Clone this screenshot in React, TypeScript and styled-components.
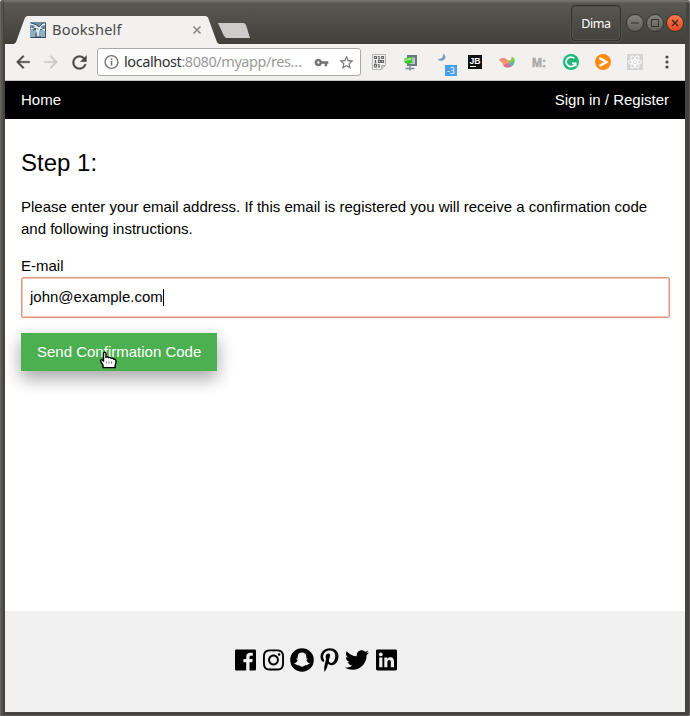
import React from 'react';
import styled, { createGlobalStyle } from 'styled-components';
import { FaInstagram, FaPinterestP, FaTwitter } from 'react-icons/fa';
import { MdVpnKey, MdStarBorder, MdRefresh, MdArrowBack, MdArrowForward } from 'react-icons/md';

const Global = createGlobalStyle`
  * { box-sizing: border-box; }
  body { margin: 0; background: #dedede; overflow: hidden; }
  svg { display: block; }
`;

const Window = styled.div`
  width: 690px;
  height: 716px;
  display: flex;
  flex-direction: column;
  padding: 0 5px 4px;
  background: #44433e;
  border-radius: 4px 4px 2px 2px;
  box-shadow: inset 1px 1px 0 #65645f, inset -1px -1px 0 #5c5b57, inset 3px 0 0 #57544d, inset 0 2px 0 #7c7a73;
`;
const TitleBar = styled.header`
  height: 44px;
  margin: 0 -1px 0 -1px;
  flex: none;
  display: flex;
  align-items: flex-start;
  justify-content: space-between;
  background: linear-gradient(#75736c 0 1px, #5a5851 3px, #403f3a 44px);
`;
const Tabs = styled.div`
  display: flex;
  padding: 16px 0 0 10px;
`;
const Tab = styled.div`
  width: 205px;
  height: 28px;
  display: flex;
  align-items: center;
  padding: 0 17px 0 16px;
  background: #f2f1f0;
  clip-path: polygon(0 100%, 2px 94%, 11px 5%, 13px 0, 192px 0, 194px 5%, 203px 94%, 205px 100%);
`;
const TabTitle = styled.span`
  flex: 1;
  margin: 0 0 2px 6px;
  font: 14.6px/20px "Noto Sans", sans-serif;
  letter-spacing: 0.2px;
  color: #494949;
`;
const NewTab = styled.div`
  width: 32px;
  height: 15px;
  margin: 7px 0 0 -1px;
  background: #cdccca;
  clip-path: polygon(0 0, 26px 0, 28px 2px, 32px 100%, 8px 100%, 6px 13px);
`;
const WindowControls = styled.div`
  display: flex;
  align-items: flex-start;
  padding: 5px 1px 0 0;
`;
const UserButton = styled.div`
  width: 50px;
  height: 36px;
  margin-right: 4px;
  border: 1px solid #32312d;
  border-radius: 4px;
  box-shadow: 0 0 0 1px #55534d, inset 0 0 0 1px #514f49;
  font: 12.5px/35px "Noto Sans", sans-serif;
  letter-spacing: -0.4px;
  text-align: center;
  color: #fff;
`;
const WindowButton = styled.div<{ $close?: boolean }>`
  width: 18px;
  height: 18px;
  margin: 9px 1px 0;
  border: 1px solid #35342f;
  border-radius: 50%;
  background: ${p => (p.$close ? 'linear-gradient(#f47751, #e34c1e)' : 'linear-gradient(#85837c, #605f58)')};
`;
const Toolbar = styled.div`
  height: 37px;
  flex: none;
  display: flex;
  align-items: center;
  border-bottom: 1px solid #c9c8c6;
  background: #f2f1f0;
  color: #494949;
`;
const NavButton = styled.div<{ $disabled?: boolean }>`
  width: 28px;
  display: flex;
  justify-content: center;
  color: ${p => (p.$disabled ? '#cbcac9' : '#494949')};
  path:last-child { stroke: currentColor; stroke-width: 0.4; }
  &:first-child { margin-left: 4px; }
`;
const AddressBar = styled.div`
  width: 264px;
  height: 28px;
  margin-left: 4px;
  padding: 0 5px 0 6px;
  border: 1px solid #a9a9a8;
  border-radius: 3px;
  display: flex;
  align-items: center;
  background: #fff;
  color: #737373;
`;
const Url = styled.span`
  flex: 1;
  margin: 0 0 2px 4px;
  font: 14.5px/22px "Noto Sans", sans-serif;
  letter-spacing: -0.43px;
  color: #9a9a9a;
  white-space: nowrap;
  b { font-weight: 400; color: #303030; }
`;
const KeyIcon = styled.span`
  margin-right: 9px;
`;
const Extensions = styled.div`
  display: flex;
  margin-left: 2px;
`;
const Extension = styled.div`
  width: 32px;
  height: 28px;
  display: flex;
  align-items: center;
  justify-content: center;
  position: relative;
`;
const Badge = styled.span`
  position: absolute;
  left: 18px;
  top: 17px;
  width: 12px;
  height: 11px;
  background: #48a0ed;
  color: #fff;
  font: 9px/11px "Noto Sans", sans-serif;
  text-align: center;
`;
const Page = styled.div`
  flex: 1;
  min-height: 0;
  display: flex;
  flex-direction: column;
  background: #fff;
  color: #000;
  font: 15px/22.5px "Liberation Sans", Arial, sans-serif;
`;
const SiteNav = styled.nav`
  height: 38px;
  flex: none;
  padding: 8px 16px;
  display: flex;
  justify-content: space-between;
  background: #000;
  color: #fff;
`;
const Main = styled.main`
  flex: 1;
  padding: 26px 16px 0;
`;
const Heading = styled.h3`
  margin: 0 0 15px;
  font-size: 24px;
  line-height: 36px;
  font-weight: 400;
`;
const Intro = styled.p`
  margin: 0 0 15px;
  line-height: 22px;
`;
const Label = styled.label`
  display: block;
  height: 22px;
`;
const EmailField = styled.div`
  width: 649px;
  height: 41px;
  padding: 0 8px;
  display: flex;
  align-items: center;
  border: 1px solid #dc987f;
  border-radius: 2px;
  box-shadow: inset 0 0 0 1px #f8c9b8;
`;
const Caret = styled.span`
  width: 1px;
  height: 17px;
  background: #000;
`;
const SendButton = styled.div`
  width: 196px;
  height: 38px;
  margin-top: 15px;
  padding: 8px 16px;
  position: relative;
  background: #4caf50;
  color: #fff;
  white-space: nowrap;
  box-shadow: 0 8px 16px 0 rgba(0, 0, 0, 0.2), 0 6px 20px 0 rgba(0, 0, 0, 0.19);
`;
const Pointer = styled.svg`
  position: absolute;
  left: 78px;
  top: 18px;
`;
const Footer = styled.footer`
  height: 101px;
  flex: none;
  display: flex;
  align-items: center;
  padding: 0 0 3px 230px;
  background: #f0f0f0;
`;
const Social = styled.span<{ $w: number; $gap?: number }>`
  width: ${p => p.$w}px;
  margin-right: ${p => p.$gap ?? 0}px;
  display: flex;
  justify-content: center;
`;

const Favicon = () => (
  <svg width="16" height="16" viewBox="0 0 16 16">
    <rect width="16" height="16" rx="1" fill="#6e8da5" />
    <path d="M0 8h16v7H0z" fill="#91aebe" />
    <path d="M0 2l5 1 3 3 4-3 4-1M1 7l5-2 4 1 5 2M6 7l2 3v5M10 6l-2 4" stroke="#e9f3f4" strokeWidth="1.4" fill="none" />
    <path d="M1 1l6 2 2 2 4-4M2 5l4 2-3 1M10 8l4-2M6 11v4h5M.5 15.500h15V.5" stroke="#263b4d" strokeWidth=".8" fill="none" />
  </svg>
);
const InfoIcon = () => (
  <svg width="16" height="16" viewBox="0 0 16 16" fill="none" stroke="#737373" strokeWidth="1.4">
    <circle cx="7.500" cy="8" r="6.4" /><path d="M7.500 7v4.500M7.500 4.300v1.600" strokeWidth="1.6" />
  </svg>
);
const BinaryIcon = () => (
  <svg width="16" height="16" viewBox="0 0 16 16">
    <path d="M1.500.5h13v11l-4 4h-9z" fill="#f2f2f2" stroke="#b5b5b5" />
    <path d="M14 11.500h-3.500V15" fill="#ccc" stroke="#aaa" />
    <g fill="none" stroke="#686868" strokeWidth="1.200">
      <path d="M3.500 2.500h2v2h-2zM8 2v3M7 2.500h1M7 5h2M10.500 2.500h2v2h-2zM4.500 6v3M3.500 6.500h1M3.500 9h2M7.500 6.500h2v2h-2zM10.500 6.500h2v2h-2zM3.500 10.500h2v2.500h-2zM8 10v3M7 10.500h1M7 13h2" />
    </g>
  </svg>
);
const ProxyIcon = () => (
  <svg width="16" height="17" viewBox="0 0 16 17">
    <path d="M4 1h10v11H4z" fill="#6f7a80" /><path d="M6.500 3.500H12V10H6.500z" fill="#bcc6ca" />
    <path d="M1.500 4.500l7-2 1 6-3 .7-2 1.800-.8-1.500-2.200-.8z" fill="#38bf32" /><path d="M2.200 5l5.800-1.500.5 2.500-6.300 1z" fill="#91ed6f" />
    <path d="M7 11.500v5M2.500 14.500h9" stroke="#7f8c94" strokeWidth="1.500" />
  </svg>
);
const MoonIcon = () => (
  <svg width="20" height="20" viewBox="0 0 20 20">
    <path d="M10.500 2c3 2.500 1.500 6.500-2.500 6.500-1.300 0-2.300-.4-3-1.200 3 .4 5.500-1.200 5.500-5.300z" fill="#7893b4" stroke="#7893b4" strokeWidth=".5" />
  </svg>
);
const JbIcon = () => (
  <svg width="14" height="14" viewBox="0 0 14 14">
    <rect width="14" height="14" fill="#111" /><rect x="2" y="11" width="6" height="1" fill="#fff" />
    <text x="1.500" y="8.800" fill="#fff" fontFamily="Liberation Sans, sans-serif" fontWeight="700" fontSize="9.500" textLength="11" lengthAdjust="spacingAndGlyphs">JB</text>
  </svg>
);
const SwirlIcon = () => (
  <svg width="16" height="14" viewBox="0 0 16 14">
    <path d="M0 4c2 0 3-1.500 5-1 2.500.6 3.500 3 6 2.500 2-.4 2-2 1.500-3.500C15 2.500 16 4.500 15.500 6.500 15 10 12.500 12.500 9 12.500c-3.500 0-5.500-2-5.500-4.500C2 7.500.8 6 0 4z" fill="#f2a25c" />
    <path d="M0 4c2 0 3-1.500 5-1 2 .5 3 2.200 4.500 2.500C7 7.500 2.500 8 0 4z" fill="#ef8f78" />
    <path d="M8.500 5.500c2.500.8 4.500-.5 4-3.500C15 2.500 16 4.500 15.500 6.500 13 8 10.500 7.500 8.500 5.500z" fill="#79cf55" />
    <path d="M10 7c2 .7 4 .5 5.500-.5-.3 2-1.200 3.500-2.700 4.700z" fill="#4bb9b0" />
    <path d="M8.500 7.500l4.300 3.700C11.500 12 10 12.500 8.500 12.500z" fill="#a978cf" />
    <path d="M7.500 7.500l1.500 5c-2 0-3.500-.6-4.500-2z" fill="#e76698" />
  </svg>
);
const MIcon = () => (
  <svg width="16" height="14" viewBox="0 0 16 14">
    <text x="1" y="11.500" fill="#aaa" stroke="#aaa" strokeWidth=".5" fontFamily="Liberation Sans, sans-serif" fontWeight="700" fontSize="12" textLength="14">M:</text>
  </svg>
);
const GrammarIcon = () => (
  <svg width="16" height="16" viewBox="0 0 16 16"><circle cx="8" cy="8" r="8" fill="#20b779" />
    <path d="M11.200 4.300A4.800 4.800 0 1 0 12.500 9.300H9M12.700 9v3.300" fill="none" stroke="#fff" strokeWidth="1.700" /></svg>
);
const PlayIcon = () => (
  <svg width="16" height="16" viewBox="0 0 16 16"><circle cx="8" cy="8" r="8" fill="#ff8a12" />
    <path d="M4.500 4l6.800 4-6.800 4" fill="none" stroke="#fff" strokeWidth="2.500" /></svg>
);
const ReactIcon = () => (
  <svg width="16" height="16" viewBox="0 0 16 16"><path fill="#d4d4d4" d="M0 0h16v16H0z" />
    <g fill="none" stroke="#fff" strokeWidth="1">
      <ellipse cx="8" cy="8" rx="6.600" ry="2.500" /><ellipse cx="8" cy="8" rx="6.600" ry="2.500" transform="rotate(60 8 8)" /><ellipse cx="8" cy="8" rx="6.600" ry="2.500" transform="rotate(120 8 8)" />
    </g><circle cx="8" cy="8" r="1.400" fill="#fff" /></svg>
);
const MenuIcon = () => (
  <svg width="4" height="16" viewBox="0 0 4 16" fill="#494949"><circle cx="2" cy="3" r="1.600" /><circle cx="2" cy="8" r="1.600" /><circle cx="2" cy="13" r="1.600" /></svg>
);
const FacebookIcon = () => (
  <svg width="21" height="22" viewBox="0 0 21 22">
    <path fillRule="evenodd" d="M1.200.5h18.600q1.200 0 1.200 1.200v18.600q0 1.200-1.200 1.200h-5.300v-8.200h2.800l.4-3.200h-3.200V8.200c0-.9.3-1.500 1.600-1.500h1.700V3.800c-.3 0-1.300-.1-2.500-.1-2.500 0-4.100 1.500-4.100 4.200v2.200H8.400v3.200h2.800v8.200H1.200Q0 21.500 0 20.300V1.700Q0 .5 1.200 .5z" />
  </svg>
);
const SnapchatIcon = () => (
  <svg width="24" height="24" viewBox="0 0 24 24">
    <circle cx="12" cy="12" r="11.800" />
    <path fill="#f0f0f0" d="M12 4.600c-2.900 0-4.500 2-4.400 4.500v1.500c-.3.200-1-.2-1.300.1-.4.500 1.100.9 1.300 1.400.2 1-1.500 2.800-3.100 3.100-.5.600.7 1 1.900 1.200.3.300.1.800.5.900.7.100 1.500-.2 2.300.2.900.6 1.600 1.200 2.800 1.200s1.900-.6 2.800-1.200c.8-.4 1.600-.1 2.300-.2.400-.1.200-.6.500-.9 1.200-.2 2.400-.6 1.900-1.200-1.600-.3-3.300-2.100-3.100-3.100.2-.5 1.700-.9 1.300-1.400-.3-.3-1 .1-1.300-.1V9.100c.1-2.500-1.500-4.500-4.400-4.500z" />
  </svg>
);
const LinkedinIcon = () => (
  <svg width="21" height="22" viewBox="0 0 21 22">
    <rect y=".5" width="21" height="21" rx="1.400" />
    <g fill="#f0f0f0"><circle cx="4.800" cy="5.400" r="1.850" /><path d="M3.200 8.500h3.200v9.800H3.200zM8.300 8.500h3v1.400c.6-1 1.600-1.700 3-1.700 2.900 0 3.700 1.900 3.700 4.600v5.500h-3.200v-5c0-1.300-.3-2.400-1.600-2.400-1.400 0-1.800 1.100-1.800 2.400v5H8.300z" /></g>
  </svg>
);

export default function App() {
  return (
    <>
      <Global />
      <Window>
        <TitleBar>
          <Tabs>
            <Tab>
              <Favicon /><TabTitle>Bookshelf</TabTitle>
              <svg width="10" height="10" viewBox="0 0 10 10"><path d="M1.500 1.500l7 7m0-7l-7 7" stroke="#8b8b8a" strokeWidth="1.700" /></svg>
            </Tab>
            <NewTab />
          </Tabs>
          <WindowControls>
            <UserButton>Dima</UserButton>
            <WindowButton><svg width="16" height="16"><path d="M4 8h8" stroke="#34332f" /></svg></WindowButton>
            <WindowButton><svg width="16" height="16"><path d="M4.500 4.500h7v7h-7z" stroke="#34332f" fill="none" /></svg></WindowButton>
            <WindowButton $close><svg width="16" height="16"><path d="M5 5l6 6m0-6l-6 6" stroke="#3b211a" strokeWidth="1.300" /></svg></WindowButton>
          </WindowControls>
        </TitleBar>
        <Toolbar>
          <NavButton><MdArrowBack size={20} /></NavButton>
          <NavButton $disabled><MdArrowForward size={20} /></NavButton>
          <NavButton><MdRefresh size={21} /></NavButton>
          <AddressBar>
            <InfoIcon />
            <Url><b>localhost</b>:8080/myapp/res…</Url>
            <KeyIcon><MdVpnKey size={15} /></KeyIcon>
            <MdStarBorder size={17} />
          </AddressBar>
          <Extensions>
            <Extension><BinaryIcon /></Extension>
            <Extension><ProxyIcon /></Extension>
            <Extension><MoonIcon /><Badge>-3</Badge></Extension>
            <Extension><JbIcon /></Extension>
            <Extension><SwirlIcon /></Extension>
            <Extension><MIcon /></Extension>
            <Extension><GrammarIcon /></Extension>
            <Extension><PlayIcon /></Extension>
            <Extension><ReactIcon /></Extension>
            <Extension><MenuIcon /></Extension>
          </Extensions>
        </Toolbar>
        <Page>
          <SiteNav><span>Home</span><span>Sign in / Register</span></SiteNav>
          <Main>
            <Heading>Step 1:</Heading>
            <Intro>Please enter your email address. If this email is registered you will receive a confirmation code and following instructions.</Intro>
            <Label>E-mail</Label>
            <EmailField>john@example.com<Caret /></EmailField>
            <SendButton>
              Send Confirmation Code
              <Pointer width="19" height="19" viewBox="0 0 19 19">
                <path d="M4.500 2C5.500.7 7 1.300 7 2.700V6c1-.5 2-.2 2.500.6 1-.4 2-.1 2.600.7 1.200-.4 2.200 0 2.700.9 1.200-.2 2 .5 2.200 1.600.2 2-.2 3.200-.8 4.200v2.600H4v-2.300L1.800 10.500c-.9-1.200.7-2.300 1.800-1.300l.9.700z" fill="#fff" stroke="#000" strokeWidth="1.400" />
                <path d="M7.500 10.500v2M10 10.500v2M12.500 10.500v2" stroke="#777" />
              </Pointer>
            </SendButton>
          </Main>
          <Footer>
            <Social $w={21} $gap={6}><FacebookIcon /></Social>
            <Social $w={23} $gap={5}><FaInstagram size={24} /></Social>
            <Social $w={24} $gap={6}><SnapchatIcon /></Social>
            <Social $w={19} $gap={6}><FaPinterestP size={24} /></Social>
            <Social $w={24} $gap={7}><FaTwitter size={24} /></Social>
            <Social $w={21}><LinkedinIcon /></Social>
          </Footer>
        </Page>
      </Window>
    </>
  );
}
